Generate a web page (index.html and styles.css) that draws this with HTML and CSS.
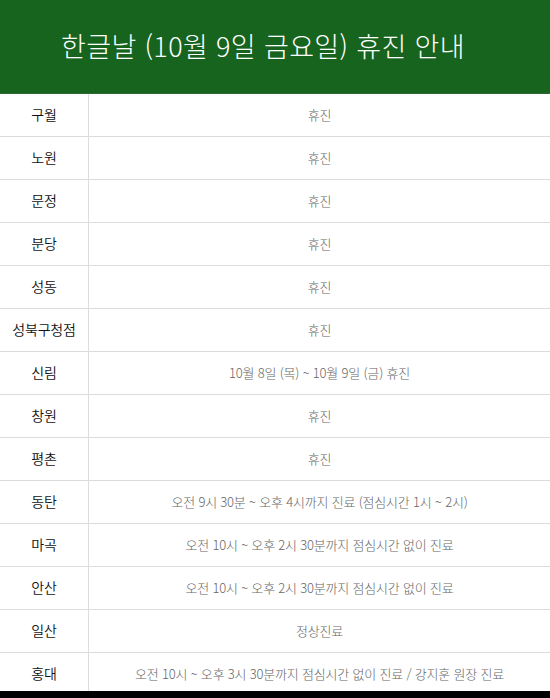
FILE: index.html
```html
<!DOCTYPE html>
<html lang="ko">
<head>
<meta charset="utf-8">
<link rel="stylesheet" href="styles.css">
</head>
<body>
<div class="page">
  <header class="title">한글날 (10월 9일 금요일) 휴진 안내</header>
  <div class="list">
    <div class="row"><div class="name">구월</div><div class="val">휴진</div></div>
    <div class="row"><div class="name">노원</div><div class="val">휴진</div></div>
    <div class="row"><div class="name">문정</div><div class="val">휴진</div></div>
    <div class="row"><div class="name">분당</div><div class="val">휴진</div></div>
    <div class="row"><div class="name">성동</div><div class="val">휴진</div></div>
    <div class="row"><div class="name">성북구청점</div><div class="val">휴진</div></div>
    <div class="row"><div class="name">신림</div><div class="val">10월 8일 (목) ~ 10월 9일 (금) 휴진</div></div>
    <div class="row"><div class="name">창원</div><div class="val">휴진</div></div>
    <div class="row"><div class="name">평촌</div><div class="val">휴진</div></div>
    <div class="row"><div class="name">동탄</div><div class="val">오전 9시 30분 ~ 오후 4시까지 진료 (점심시간 1시 ~ 2시)</div></div>
    <div class="row"><div class="name">마곡</div><div class="val">오전 10시 ~ 오후 2시 30분까지 점심시간 없이 진료</div></div>
    <div class="row"><div class="name">안산</div><div class="val">오전 10시 ~ 오후 2시 30분까지 점심시간 없이 진료</div></div>
    <div class="row"><div class="name">일산</div><div class="val">정상진료</div></div>
    <div class="row"><div class="name">홍대</div><div class="val">오전 10시 ~ 오후 3시 30분까지 점심시간 없이 진료 / 강지훈 원장 진료</div></div>
  </div>
</div>
</body>
</html>
```
FILE: styles.css
```css
html { background: #000; }
body {
  margin: 0;
  font-family: "Noto Sans CJK KR", "Noto Sans", sans-serif;
}
.page {
  width: 550px;
  height: 691px;
  overflow: hidden;
  background: #fff;
}
.title {
  height: 94px;
  background: #17641f;
  color: #fff;
  font-size: 27px;
  font-weight: 300;
  letter-spacing: 0.35px;
  display: flex;
  align-items: center;
  justify-content: center;
  box-sizing: border-box;
  border-bottom: 1px solid #2d6a33;
  padding: 0 24px 2px 0;
}
.row {
  display: grid;
  grid-template-columns: 89px 1fr;
  height: 43px;
  box-sizing: border-box;
  border-bottom: 1px solid #dcdcdc;
}
.name {
  display: flex;
  align-items: center;
  justify-content: center;
  font-size: 14px;
  font-weight: 350;
  color: #111;
  border-right: 1px solid #dcdcdc;
  letter-spacing: -0.2px;
  padding-bottom: 2px;
}
.val {
  display: flex;
  align-items: center;
  justify-content: center;
  font-size: 13px;
  font-weight: 300;
  color: #666;
  letter-spacing: -0.2px;
  padding-bottom: 2px;
}
```
